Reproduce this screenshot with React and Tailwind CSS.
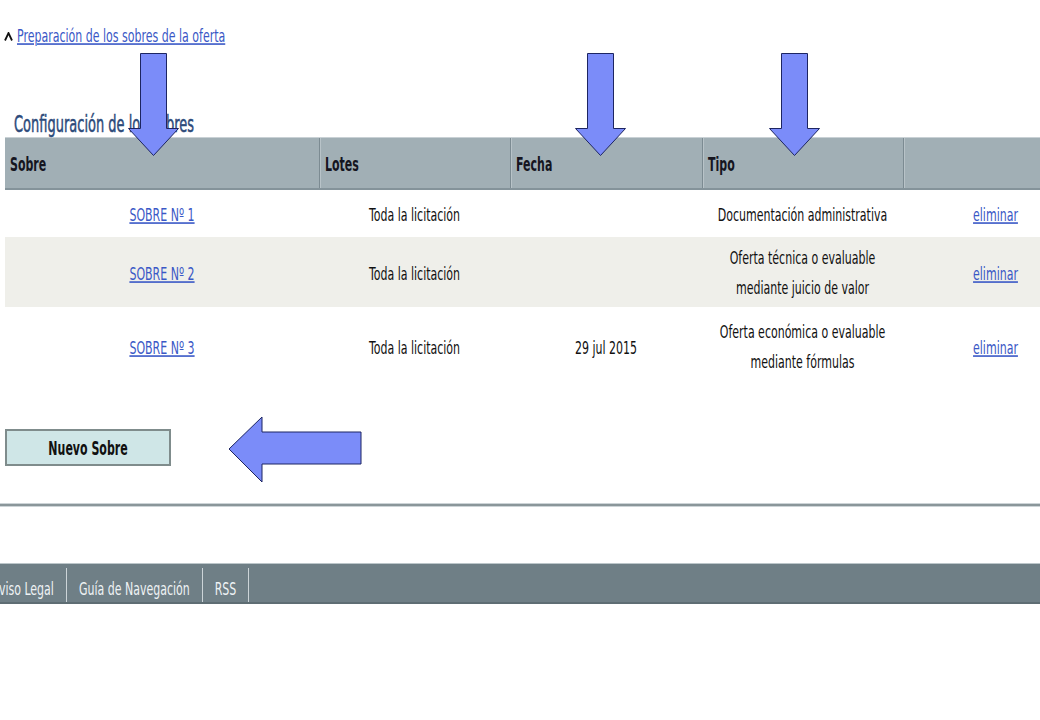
import React from 'react';

// Vertically stretched text, to match the tall narrow type of the capture
const Tall = ({ children, className = '' }) => (
  <span className={`inline-block origin-center scale-y-[1.6] translate-y-[3px] ${className}`}>{children}</span>
);

const TallBold = ({ children, className = '' }) => (
  <span className={`inline-block origin-center scale-y-[1.75] translate-y-[3px] font-bold ${className}`}>{children}</span>
);

const linkCls = 'text-[#3a58c6] underline decoration-[1px] underline-offset-[1px]';

const DownArrow = ({ className }) => (
  <svg className={`absolute top-[53px] ${className}`} width="53" height="104" viewBox="0 0 53 104">
    <polygon
      points="13.5,0.5 39.5,0.5 39.5,75.5 51.5,75.5 26.5,102.5 1.5,75.5 13.5,75.5"
      fill="#7b8cf9"
      stroke="#1d2562"
      strokeWidth="1"
    />
  </svg>
);

const LeftArrow = () => (
  <svg className="absolute left-[228px] top-[416px]" width="135" height="68" viewBox="0 0 135 68">
    <polygon
      points="1,33 34,1 34,16 133,16 133,48 34,48 34,66"
      fill="#7b8cf9"
      stroke="#1d2562"
      strokeWidth="1"
    />
  </svg>
);

const rows = [
  { sobre: 'SOBRE Nº 1', lotes: 'Toda la licitación', fecha: '', tipo: ['Documentación administrativa'], h: 'h-[47px]', bg: 'bg-white' },
  { sobre: 'SOBRE Nº 2', lotes: 'Toda la licitación', fecha: '', tipo: ['Oferta técnica o evaluable', 'mediante juicio de valor'], h: 'h-[70px]', bg: 'bg-[#efefea]' },
  { sobre: 'SOBRE Nº 3', lotes: 'Toda la licitación', fecha: '29 jul 2015', tipo: ['Oferta económica o evaluable', 'mediante fórmulas'], h: 'h-[78px]', bg: 'bg-white' },
];

const cols = 'grid grid-cols-[314px_191px_192px_201px_185px]';

export default function App() {
  return (
    <div className="relative w-[1040px] h-[720px] overflow-hidden bg-white font-['DejaVu_Sans',sans-serif] text-[11px] text-[#111]">
      {/* Breadcrumb link */}
      <div className="mt-[25px] h-[18px] pl-[4px] flex items-center gap-[4px]">
        <svg width="9" height="9" viewBox="0 0 9 9" className="mt-[4px]">
          <polyline points="1,8.5 4.5,1 8,8.5" fill="none" stroke="#111" strokeWidth="1.8" />
        </svg>
        <a href="#">
          <Tall className={linkCls}>Preparación de los sobres de la oferta</Tall>
        </a>
      </div>

      {/* Section title */}
      <div className="mt-[69px] h-[25px] pl-[14px] flex items-center">
        <span className="inline-block origin-center scale-y-[1.72] text-[13px] text-[#2c4a7a] [-webkit-text-stroke:0.3px_#2c4a7a]">
          Configuración de los sobres
        </span>
      </div>

      {/* Table */}
      <div className="ml-[5px] w-[1083px]">
        <div className={`${cols} h-[53px] bg-[#a1afb5] border-t border-[#c9d1d5] border-b-2 border-b-[#84939a] text-[#15151f]`}>
          {['Sobre', 'Lotes', 'Fecha', 'Tipo', ''].map((label, i) => (
            <div
              key={i}
              className={`flex items-center pl-[5px] ${i > 0 ? 'border-l border-[#7c8b92] shadow-[inset_1px_0_0_#b8c3c8]' : ''}`}
            >
              <TallBold className="text-[11px]">{label}</TallBold>
            </div>
          ))}
        </div>

        {rows.map((r) => (
          <div key={r.sobre} className={`${cols} ${r.h} ${r.bg}`}>
            <div className="flex items-center justify-center">
              <a href="#">
                <Tall className={linkCls}>{r.sobre}</Tall>
              </a>
            </div>
            <div className="flex items-center justify-center">
              <Tall>{r.lotes}</Tall>
            </div>
            <div className="flex items-center justify-center">
              <Tall>{r.fecha}</Tall>
            </div>
            <div className="flex items-center justify-center text-center">
              <span className="inline-block origin-center scale-y-[1.6] translate-y-[3px] leading-[18.6px]">
                {r.tipo.map((line) => (
                  <span key={line} className="block">{line}</span>
                ))}
              </span>
            </div>
            <div className="flex items-center justify-center">
              <a href="#">
                <Tall className={linkCls}>eliminar</Tall>
              </a>
            </div>
          </div>
        ))}
      </div>

      {/* Button */}
      <div className="mt-[44px] ml-[5px]">
        <button className="w-[166px] h-[37px] flex items-center justify-center bg-[#cfe6e7] border-2 border-[#7f8c8c] text-[#111]">
          <TallBold className="text-[11px]">Nuevo Sobre</TallBold>
        </button>
      </div>

      {/* Divider */}
      <div className="mt-[37px] h-[4px] bg-[#8a969a] border-y border-[#cdd4d7]" />

      {/* Footer */}
      <div className="mt-[56px] h-[41px] bg-[#6f7f86] border-t border-[#bcc6ca] border-b-2 border-b-[#5e6d73] flex items-end">
        <div className="-ml-[20px] flex h-[34px] text-[#eef2f4]">
          {['Aviso Legal', 'Guía de Navegación', 'RSS'].map((item) => (
            <div key={item} className="flex items-center px-[12px] pt-[4px] border-r border-[#ccd4d8]">
              <Tall>{item}</Tall>
            </div>
          ))}
        </div>
      </div>

      {/* Annotation arrows */}
      <DownArrow className="left-[127px]" />
      <DownArrow className="left-[574px]" />
      <DownArrow className="left-[768px]" />
      <LeftArrow />
    </div>
  );
}
